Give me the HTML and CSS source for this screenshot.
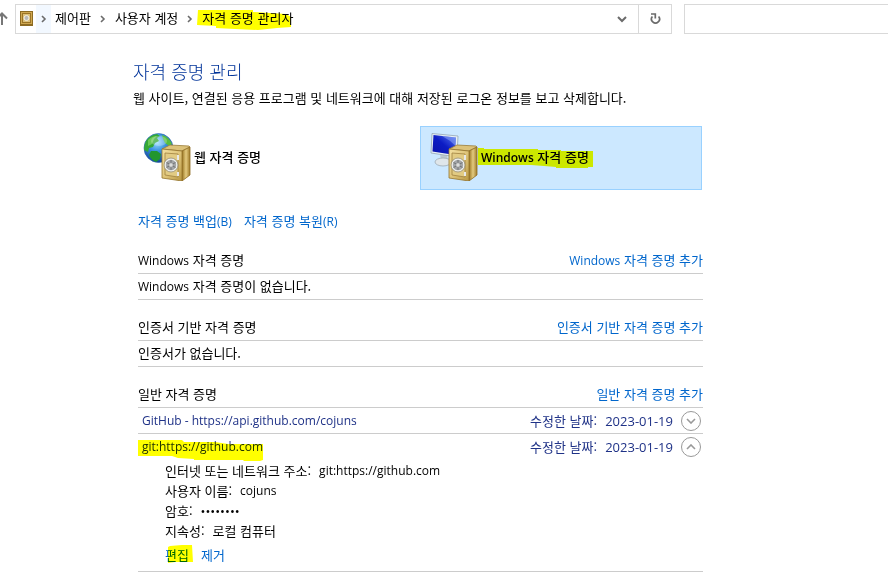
FILE: index.html
```
<!doctype html>
<html lang="ko">
  <head>
    <meta charset="UTF-8" />
    <meta name="viewport" content="width=device-width, initial-scale=1.0" />
    <title>자격 증명 관리자</title>
    <link rel="stylesheet" href="styles.css" />
  </head>
  <body>
    <!-- Shared icon parts -->
    <svg class="defs" width="0" height="0" aria-hidden="true">
      <defs>
        <linearGradient id="gold" x1="0" y1="0" x2="1" y2="1">
          <stop offset="0" stop-color="#f3e0a0" />
          <stop offset="0.5" stop-color="#dfc57a" />
          <stop offset="1" stop-color="#b99843" />
        </linearGradient>
        <linearGradient id="goldSide" x1="0" y1="0" x2="1" y2="0">
          <stop offset="0" stop-color="#9a7622" />
          <stop offset="0.5" stop-color="#e3ca7f" />
          <stop offset="1" stop-color="#a07c2a" />
        </linearGradient>
        <radialGradient id="ocean" cx="0.45" cy="0.3" r="0.75">
          <stop offset="0" stop-color="#9fe0ff" />
          <stop offset="0.4" stop-color="#3b93e0" />
          <stop offset="1" stop-color="#0e3b94" />
        </radialGradient>
        <linearGradient id="screen" x1="0" y1="1" x2="1" y2="0">
          <stop offset="0" stop-color="#0a12a8" />
          <stop offset="0.5" stop-color="#0c1cc4" />
          <stop offset="1" stop-color="#5a7af0" />
        </linearGradient>
        <symbol id="safe" viewBox="0 0 30 38">
          <path d="M1 5 L9 1 L28 2 L29 3 L21 7 Z" fill="#dcc27a" stroke="#9a7c38" stroke-width="0.8" />
          <path d="M21 7 L29 3 L29 31 L21 37 Z" fill="url(#goldSide)" stroke="#8f6d24" stroke-width="0.8" />
          <path d="M1 5 L21 7 L21 37 L1 34 Z" fill="url(#gold)" stroke="#94742c" stroke-width="0.8" />
          <path d="M4 9 L17 10 L17 33 L4 31 Z" fill="#e2cb83" stroke="#a08240" stroke-width="0.8" />
          <path d="M17 11 v5 M17 28 v4" stroke="#e8e8e8" stroke-width="2" />
          <circle cx="10" cy="21" r="6" fill="#a3a5a7" stroke="#eceeee" stroke-width="1.6" />
          <circle cx="10" cy="21" r="7" fill="none" stroke="#8c897e" stroke-width="0.7" />
          <path d="M10 16 v10 M5.500 18.500 l9 5 M14.500 18.500 l-9 5" stroke="#707376" stroke-width="1" />
          <circle cx="10" cy="21" r="2.2" fill="#dcdddd" stroke="#88898c" stroke-width="0.6" />
        </symbol>
      </defs>
    </svg>

    <header class="toolbar">
      <button type="button" class="up-button" aria-label="위로">
        <svg width="8" height="14" viewBox="0 0 8 14" fill="none" stroke="#777" stroke-width="2">
          <path d="M2 13 V2 M-3 6.500 L2 1.500 L7 6.500" />
        </svg>
      </button>
      <nav class="address" aria-label="주소">
        <span class="address-icon">
          <svg width="13" height="15" viewBox="0 0 13 15">
            <rect x="0.500" y="0.500" width="12" height="14" fill="#cfa750" stroke="#8d6b22" />
            <rect x="2.500" y="2.500" width="8" height="9" fill="#dcc07a" stroke="#9b7426" />
            <circle cx="6.500" cy="7" r="2.500" fill="#b9b9b9" stroke="#f5f0e0" />
            <path d="M1 13.500 h11" stroke="#8d6b22" />
          </svg>
        </span>
        <span class="crumb-arrow first">
          <svg width="6" height="8" viewBox="0 0 6 8" fill="none" stroke="#6b6b6b" stroke-width="1.600"><path d="M1 1 L4 4 L1 7" /></svg>
        </span>
        <a class="crumb" href="#">제어판</a>
        <span class="crumb-arrow">
          <svg width="6" height="8" viewBox="0 0 6 8" fill="none" stroke="#6b6b6b" stroke-width="1.600"><path d="M1 1 L4 4 L1 7" /></svg>
        </span>
        <a class="crumb" href="#">사용자 계정</a>
        <span class="crumb-arrow">
          <svg width="6" height="8" viewBox="0 0 6 8" fill="none" stroke="#6b6b6b" stroke-width="1.600"><path d="M1 1 L4 4 L1 7" /></svg>
        </span>
        <a class="crumb marked" href="#">자격 증명 관리자
          <svg class="marker marker-crumb" width="96" height="20" viewBox="196 10 96 20">
            <path d="M197 10 H252 V12 L285 14 L290 17 V27 L276 28 L257 30 L234 29 L215 28 V26 L196 25 Z" />
          </svg>
        </a>
        <button type="button" class="history-button" aria-label="이전 위치">
          <svg width="10" height="7" viewBox="0 0 10 7" fill="none" stroke="#6b6b6b" stroke-width="2"><path d="M1 1 L5 5 L9 1" /></svg>
        </button>
        <button type="button" class="refresh-button" aria-label="새로 고침">
          <svg width="11" height="12" viewBox="0 0 11 12" fill="none" stroke="#6b6b6b" stroke-width="1.700">
            <path d="M8.600 3.500 A4 4 0 1 1 2.400 3.500" />
            <path d="M1 1 H5.300 V5.400" />
          </svg>
        </button>
      </nav>
      <input class="search" type="search" aria-label="제어판 검색" />
    </header>

    <main>
      <h1>자격 증명 관리</h1>
      <p class="intro">웹 사이트, 연결된 응용 프로그램 및 네트워크에 대해 저장된 로그온 정보를 보고 삭제합니다.</p>

      <div class="vaults">
        <button type="button" class="vault">
          <svg width="48" height="48" viewBox="0 0 48 48">
            <circle cx="15.500" cy="15" r="14.500" fill="url(#ocean)" stroke="#2b64a8" stroke-width="0.600" />
            <path d="M3 8 Q7 2 14 1 L17 3 L14 5 L16 8 L12 10 L10 14 L6 15 L5 19 L1 17 Q1 12 3 8 Z" fill="#35a835" />
            <path d="M19 2 Q26 4 29 11 L26 13 L22 10 L20 6 Z" fill="#55bd3f" />
            <path d="M8 18 L14 18 L18 21 L17 26 L13 29 Q8 27 6 22 Z" fill="#22962f" />
            <path d="M5 7 Q9 3 14 3 L11 6 L9 11 L5 13 Z" fill="#83d766" opacity="0.700" />
            <ellipse cx="16" cy="8" rx="8" ry="5" fill="#fff" opacity="0.250" />
            <use href="#safe" x="18" y="11" width="30" height="38" />
          </svg>
          <span>웹 자격 증명</span>
        </button>
        <button type="button" class="vault selected">
          <svg width="48" height="48" viewBox="0 0 48 48">
            <path d="M10 21 L17 21 L18 28 L11 27 Z" fill="#bcc8cf" />
            <ellipse cx="13" cy="29" rx="8" ry="4" fill="#dfe6ea" stroke="#9eabb4" stroke-width="0.800" />
            <path d="M2 0.500 L28 3 L27 24 L1 20 Z" fill="#e9f0f5" stroke="#93a6b5" stroke-width="0.800" />
            <path d="M3.500 2 L26 4.500 L25 22 L2.500 18.500 Z" fill="url(#screen)" />
            <path d="M12 3 L26 4.500 L25.500 13 Q20 7 12 3 Z" fill="#9db8ff" opacity="0.450" />
            <use href="#safe" x="18" y="11" width="30" height="38" />
          </svg>
          <span class="marked"><span class="latin">Windows</span> 자격 증명
            <svg class="marker marker-vault" width="115" height="20" viewBox="477 149 115 20">
              <path d="M477 149 H483 V150 H537 V151 H560 V152 H592 V168 H587 V169 H555 V168 L543 167 L530 166 H477 Z" />
            </svg>
          </span>
        </button>
      </div>

      <div class="tasks">
        <a href="#">자격 증명 백업<span class="latin">(B)</span></a>
        <a href="#">자격 증명 복원<span class="latin">(R)</span></a>
      </div>

      <section class="group">
        <header>
          <h2><span class="latin">Windows</span> 자격 증명</h2>
          <a href="#"><span class="latin">Windows</span> 자격 증명 추가</a>
        </header>
        <p class="row"><span class="latin">Windows</span> 자격 증명이 없습니다.</p>
      </section>

      <section class="group">
        <header>
          <h2>인증서 기반 자격 증명</h2>
          <a href="#">인증서 기반 자격 증명 추가</a>
        </header>
        <p class="row">인증서가 없습니다.</p>
      </section>

      <section class="group">
        <header>
          <h2>일반 자격 증명</h2>
          <a href="#">일반 자격 증명 추가</a>
        </header>
        <div class="row entry">
          <span class="latin">GitHub - https://api.github.com/cojuns</span>
          <span class="modified">수정한 날짜: <time>2023-01-19</time></span>
          <button type="button" class="expander" aria-label="펼치기" aria-expanded="false">
            <svg width="10" height="6" viewBox="0 0 10 6" fill="none" stroke="#999" stroke-width="1.600"><path d="M1 1 L5 5 L9 1" /></svg>
          </button>
        </div>
        <div class="row entry open">
          <span class="latin marked">git:https://github.com
            <svg class="marker marker-entry" width="125" height="21" viewBox="138 439 125 21">
              <path d="M138 439 H182 L184 441 H215 L228 443 H263 V459 L260 460 H244 L243 459 H194 V458 L178 457 L172 455 H138 Z" />
            </svg>
          </span>
          <span class="modified">수정한 날짜: <time>2023-01-19</time></span>
          <button type="button" class="expander" aria-label="접기" aria-expanded="true">
            <svg width="10" height="6" viewBox="0 0 10 6" fill="none" stroke="#999" stroke-width="1.600"><path d="M1 5 L5 1 L9 5" /></svg>
          </button>
        </div>
        <div class="details">
          <dl>
            <div><dt>인터넷 또는 네트워크 주소:</dt><dd class="latin">git:https://github.com</dd></div>
            <div><dt>사용자 이름:</dt><dd class="latin">cojuns</dd></div>
            <div><dt>암호:</dt><dd class="password">••••••••</dd></div>
            <div><dt>지속성:</dt><dd>로컬 컴퓨터</dd></div>
          </dl>
          <div class="actions">
            <a class="marked" href="#">편집
              <svg class="marker marker-edit" width="26" height="18" viewBox="168 545 26 18">
                <path d="M168 547 L170 546 L182 545 H192 L193 562 H175 L168 563 Z" />
              </svg>
            </a>
            <a href="#">제거</a>
          </div>
        </div>
      </section>
    </main>
  </body>
</html>
```

FILE: styles.css
```
* {
  box-sizing: border-box;
}
body {
  margin: 0;
  background-color: #fff;
  color: #000;
  font-family: "Noto Sans CJK KR", sans-serif;
  font-size: 13px;
  line-height: 20px;
}
button {
  padding: 0;
  border: none;
  background: none;
  font: inherit;
  color: inherit;
}
svg {
  display: block;
  flex: none;
}
h1,
h2,
p,
dl,
dd {
  margin: 0;
  font-weight: normal;
}
a {
  color: #0066cc;
  text-decoration: none;
}
.defs {
  position: absolute;
}
.latin {
  font-family: "Open Sans", "Noto Sans CJK KR", sans-serif;
  font-size: 12px;
  line-height: 16px;
}

/* Highlighter strokes over text */
.marked {
  position: relative;
}
.marker {
  position: absolute;
  fill: #ff0;
  mix-blend-mode: multiply;
  pointer-events: none;
}
.marker-vault {
  top: 1px;
  left: -3px;
}
.marker-entry {
  top: 1px;
  left: -4px;
}
.marker-edit {
  top: 0;
  left: 3px;
}

/* Address bar */
.toolbar {
  display: flex;
  align-items: center;
  height: 34px;
  padding-top: 4px;
}
.up-button {
  width: 15px;
}
.address {
  flex: 1;
  display: flex;
  align-items: stretch;
  height: 30px;
  border: 1px solid #d9d9d9;
}
.address-icon {
  display: flex;
  align-items: center;
  padding: 0 3px 2px 4px;
}
.crumb {
  color: #000;
  line-height: 26px;
}
.marker-crumb {
  top: 5px;
  left: -5px;
}
.crumb-arrow {
  display: flex;
  align-items: center;
  justify-content: center;
  width: 24px;
}
.crumb-arrow.first {
  width: 15px;
  margin-right: 4px;
  background-color: #f2f8ff;
}
.history-button,
.refresh-button {
  display: flex;
  align-items: center;
  justify-content: center;
  width: 32px;
}
.history-button {
  margin-left: auto;
}
.refresh-button {
  width: 33px;
  border-left: 1px solid #d9d9d9;
}
.search {
  width: 204px;
  height: 30px;
  margin-left: 12px;
  border: 1px solid #d9d9d9;
  border-right: none;
  border-radius: 0;
  background-color: #fff;
  outline: none;
}

/* Page */
main {
  padding: 25px 185px 0 133px;
}
h1 {
  color: #003399;
  font-size: 18px;
  font-weight: 300;
  line-height: 24px;
}
.intro {
  margin-top: 5px;
}
.vaults {
  display: grid;
  grid-template-columns: 1fr 1fr;
  gap: 5px;
  margin: 18px 1px 0 0;
}
.vault {
  display: flex;
  align-items: center;
  gap: 3px;
  height: 64px;
  padding: 0 9px 2px;
  border: 1px solid transparent;
  font-weight: 500;
  text-align: left;
}
.vault.selected {
  border-color: #99d1ff;
  background-color: #cce8ff;
}
.vault .latin {
  font-weight: 600;
}
.tasks {
  display: flex;
  gap: 12px;
  margin: 21px 0 17px 5px;
}
.group {
  margin: 0 0 15px 5px;
}
.group > header {
  display: flex;
  justify-content: space-between;
  height: 26px;
  padding-top: 2px;
  border-bottom: 1px solid #ccc;
}
h2 {
  font-size: 13px;
}
.row {
  height: 26px;
  padding-top: 2px;
  border-bottom: 1px solid #ccc;
}
.entry {
  display: flex;
  align-items: center;
  padding: 0 2px 0 4px;
  color: #1f3287;
}
.entry.open {
  height: 25px;
  border-bottom: none;
}
.modified {
  display: flex;
  gap: 8px;
  margin-left: auto;
}
.modified time {
  font-family: "Open Sans", sans-serif;
}
.expander {
  display: flex;
  align-items: center;
  justify-content: center;
  width: 20px;
  height: 20px;
  margin-left: 8px;
  border: 1px solid #999;
  border-radius: 50%;
}
.details {
  padding: 2px 0 6px 27px;
  border-bottom: 1px solid #ccc;
}
.details dl > div {
  display: flex;
  gap: 8px;
  height: 20px;
}
.details dd {
  line-height: 20px;
}
.password {
  font-family: "Open Sans", sans-serif;
}
.actions {
  display: flex;
  gap: 12px;
  margin-top: 4px;
}

@media (max-width: 800px) {
  main {
    padding-right: 20px;
    padding-left: 20px;
  }
}
```
